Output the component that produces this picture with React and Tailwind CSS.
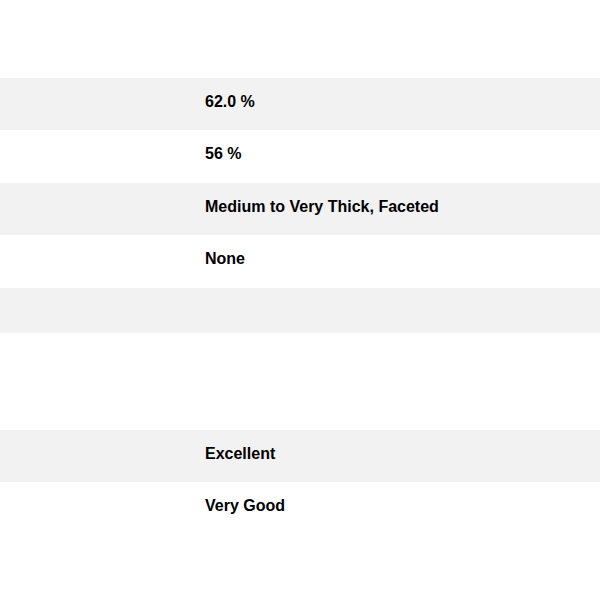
const rows = [
  { value: "62.0 %", h: "h-[52px]", shade: true },
  { value: "56 %", h: "h-[53px]", shade: false },
  { value: "Medium to Very Thick, Faceted", h: "h-[52px]", shade: true },
  { value: "None", h: "h-[53px]", shade: false },
  { value: "", h: "h-[45px]", shade: true },
];

const grades = [
  { value: "Excellent", h: "h-[52px]", shade: true },
  { value: "Very Good", h: "h-[53px]", shade: false },
];

function SpecRow({ label, value, h, shade }) {
  return (
    <div className={`flex ${h} ${shade ? "bg-[#f2f2f2]" : "bg-white"}`}>
      <div className="w-[190px] pt-[15px] px-[15px] text-[16px] leading-[18px]">{label}</div>
      <div className="flex-1 pt-[15px] px-[15px] text-[16px] leading-[18px] font-bold text-black">
        {value}
      </div>
    </div>
  );
}

export default function App() {
  return (
    <div className="w-[600px] h-[600px] bg-white font-['Liberation_Sans',Arial,sans-serif]">
      <div className="pt-[78px]">
        {rows.map((r, i) => (
          <SpecRow key={i} {...r} />
        ))}
        {/* spacer between spec groups */}
        <div className="h-[97px]" />
        {grades.map((r, i) => (
          <SpecRow key={i} {...r} />
        ))}
      </div>
    </div>
  );
}
